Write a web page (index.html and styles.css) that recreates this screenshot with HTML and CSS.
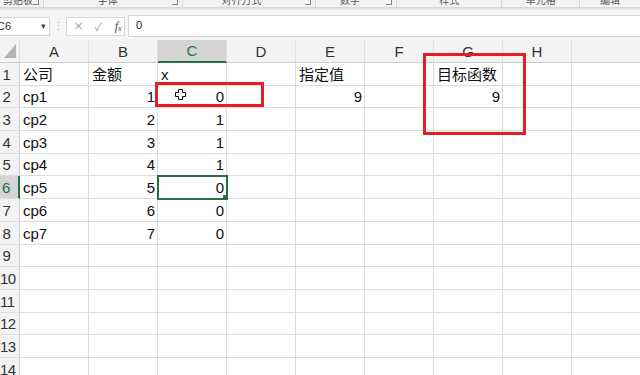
FILE: index.html
```html
<!DOCTYPE html>
<html lang="zh-CN">
<head>
    <meta charset="UTF-8">
    <meta name="viewport" content="width=device-width, initial-scale=1.0">
    <title>工作簿1 - Excel</title>
    <link rel="stylesheet" href="styles.css">
</head>
<body>
    <div class="ribbon">
        <div class="group g-clip"><span class="label">剪贴板</span><span class="launcher"></span></div>
        <div class="group g-font"><span class="label">字体</span><span class="launcher"></span></div>
        <div class="group g-align"><span class="label">对齐方式</span><span class="launcher"></span></div>
        <div class="group g-num"><span class="label">数字</span><span class="launcher"></span></div>
        <div class="group g-style"><span class="label">样式</span></div>
        <div class="group g-cells"><span class="label">单元格</span></div>
        <div class="group g-edit"><span class="label">编辑</span></div>
    </div>

    <div class="formula-row">
        <div class="name-box"><span class="ref">C6</span><span class="caret">▾</span></div>
        <span class="grip">⋮</span>
        <div class="fx-buttons">
            <span class="btn">✕</span>
            <span class="btn">✓</span>
            <span class="btn fx">f<sub>x</sub></span>
        </div>
        <div class="formula-input">0</div>
    </div>

    <div class="sheet">
        <table class="grid">
            <colgroup>
                <col class="c-head">
                <col><col><col><col><col><col><col><col>
                <col class="c-last">
            </colgroup>
            <thead>
                <tr>
                    <th class="corner">
                        <svg width="14" height="16" viewBox="0 0 14 16"><polygon points="13,1 13,15 1,15" fill="#b4b4b4"/></svg>
                    </th>
                    <th>A</th><th>B</th><th class="active">C</th><th>D</th>
                    <th>E</th><th>F</th><th>G</th><th>H</th><th></th>
                </tr>
            </thead>
            <tbody>
                <tr><th>1</th><td>公司</td><td>金额</td><td>x</td><td></td><td>指定值</td><td></td><td>目标函数</td><td></td><td></td></tr>
                <tr><th>2</th><td>cp1</td><td class="num">1</td><td class="num">0</td><td></td><td class="num">9</td><td></td><td class="num">9</td><td></td><td></td></tr>
                <tr><th>3</th><td>cp2</td><td class="num">2</td><td class="num">1</td><td></td><td></td><td></td><td></td><td></td><td></td></tr>
                <tr><th>4</th><td>cp3</td><td class="num">3</td><td class="num">1</td><td></td><td></td><td></td><td></td><td></td><td></td></tr>
                <tr><th>5</th><td>cp4</td><td class="num">4</td><td class="num">1</td><td></td><td></td><td></td><td></td><td></td><td></td></tr>
                <tr><th class="active">6</th><td>cp5</td><td class="num">5</td><td class="num selected">0</td><td></td><td></td><td></td><td></td><td></td><td></td></tr>
                <tr><th>7</th><td>cp6</td><td class="num">6</td><td class="num">0</td><td></td><td></td><td></td><td></td><td></td><td></td></tr>
                <tr><th>8</th><td>cp7</td><td class="num">7</td><td class="num">0</td><td></td><td></td><td></td><td></td><td></td><td></td></tr>
                <tr><th>9</th><td></td><td></td><td></td><td></td><td></td><td></td><td></td><td></td><td></td></tr>
                <tr><th>10</th><td></td><td></td><td></td><td></td><td></td><td></td><td></td><td></td><td></td></tr>
                <tr><th>11</th><td></td><td></td><td></td><td></td><td></td><td></td><td></td><td></td><td></td></tr>
                <tr><th>12</th><td></td><td></td><td></td><td></td><td></td><td></td><td></td><td></td><td></td></tr>
                <tr><th>13</th><td></td><td></td><td></td><td></td><td></td><td></td><td></td><td></td><td></td></tr>
                <tr><th>14</th><td></td><td></td><td></td><td></td><td></td><td></td><td></td><td></td><td></td></tr>
            </tbody>
        </table>

        <!-- red annotation boxes drawn over the grid -->
        <div class="mark mark-x"></div>
        <div class="mark mark-goal"></div>

        <svg class="cursor" width="11" height="11" viewBox="0 0 11 11">
            <path d="M3.5 0.5h4v3h3v4h-3v3h-4v-3h-3v-4h3z" fill="#fff" stroke="#000" stroke-width="1"/>
        </svg>
    </div>
</body>
</html>
```

FILE: styles.css
```css
:root {
    --grid: #dcdcdc;
    --head-bg: #f3f3f3;
    --head-line: #cdcdcd;
    --active-bg: #d4d4d4;
    --green: #217346;
    --red: #e81c24;
    --text: #111;
}

* {
    margin: 0;
    padding: 0;
    box-sizing: border-box;
}

body {
    width: 640px;
    height: 375px;
    overflow: hidden;
    background: #fff;
    font-family: 'Liberation Sans', 'Noto Sans CJK SC', sans-serif;
    color: var(--text);
}

/* ribbon group labels, cut off at the top of the shot */
.ribbon {
    display: flex;
    height: 8px;
    overflow: hidden;
    background: #f3f3f3;
    border-bottom: 1px solid #d8d8d8;
}

.group {
    position: relative;
    display: flex;
    justify-content: center;
    border-right: 1px solid #dadada;
}

.group .label {
    font-size: 10px;
    line-height: 10px;
    margin-top: -4px;
    color: #555;
}

.group .launcher {
    position: absolute;
    top: 0;
    right: 4px;
    width: 6px;
    height: 5px;
    border-right: 1px solid #888;
    border-bottom: 1px solid #888;
}

.g-clip  { width: 44px; justify-content: flex-start; padding-left: 3px; }
.g-font  { width: 139px; padding-right: 10px; }
.g-align { width: 133px; padding-right: 14px; }
.g-num   { width: 82px; padding-right: 12px; }
.g-style { width: 105px; }
.g-cells { width: 78px; }
.g-edit  { width: 60px; border-right: none; }

/* formula bar */
.formula-row {
    display: flex;
    align-items: center;
    height: 32px;
    padding-top: 2px;
    background: #f5f5f5;
    border-top: 2px solid #e4e4e4;
}

.name-box {
    display: flex;
    align-items: center;
    justify-content: space-between;
    width: 51px;
    height: 19px;
    margin-left: -1px;
    padding: 0 3px 0 0;
    background: #fff;
    border: 1px solid #d4d4d4;
    font-size: 11px;
    color: #333;
}

.name-box .ref {
    margin-left: -3px;
}

.name-box .caret {
    font-size: 9px;
    color: #444;
}

.grip {
    width: 16px;
    text-align: center;
    font-size: 11px;
    color: #b0b0b0;
}

.fx-buttons {
    display: flex;
    align-items: center;
    gap: 8px;
    width: 59px;
    height: 19px;
    padding-left: 6px;
    background: #fff;
    border: 1px solid #d8d8d8;
}

.btn {
    width: 12px;
    text-align: center;
    font-size: 11px;
    color: #a8a8a8;
}

.btn.fx {
    font-family: 'Liberation Serif', serif;
    font-style: italic;
    font-size: 12px;
    color: #444;
}

.btn.fx sub {
    font-size: 8px;
    vertical-align: -1px;
}

.formula-input {
    flex: 1;
    height: 22px;
    margin-left: 3px;
    padding: 3px 0 0 7px;
    background: #fff;
    border: 1px solid #d8d8d8;
    border-right: none;
    font-size: 11px;
    color: #222;
}

/* worksheet */
.sheet {
    position: relative;
}

.grid {
    table-layout: fixed;
    border-collapse: separate;
    border-spacing: 0;
    width: 641px;
    font-size: 15px;
}

.grid col { width: 69px; }
.grid col.c-head { width: 20px; }
.grid col.c-last { width: 72px; }

.grid thead tr { height: 22px; }
.grid tbody tr { height: 22.7px; }

.grid th,
.grid td {
    border-right: 1px solid var(--grid);
    border-bottom: 1px solid var(--grid);
    white-space: nowrap;
    overflow: hidden;
    line-height: 16px;
}

.grid thead th {
    background: var(--head-bg);
    border-right-color: #e0e0e0;
    border-bottom: 1px solid var(--head-line);
    font-weight: normal;
    color: #333;
    vertical-align: middle;
    padding-top: 1px;
}

.grid thead th.corner {
    padding: 3px 0 0 3px;
    text-align: left;
}

.grid thead th.active {
    background: var(--active-bg);
    border-bottom: 2px solid var(--green);
    color: var(--green);
}

.grid tbody th {
    background: var(--head-bg);
    border-right: 1px solid var(--head-line);
    border-bottom-color: #dedede;
    font-weight: normal;
    color: #333;
    text-align: center;
    padding: 0 6px 2px 0;
    vertical-align: bottom;
    letter-spacing: -0.5px;
}

.grid tbody th.active {
    background: var(--active-bg);
    border-right: 2px solid var(--green);
    color: var(--green);
}

.grid td {
    padding: 0 2px 2px 3px;
    vertical-align: bottom;
}

.grid td.num {
    text-align: right;
}

.grid td.selected {
    position: relative;
    outline: 2px solid var(--green);
    outline-offset: -1px;
}

.grid td.selected::after {
    content: "";
    position: absolute;
    right: -3px;
    bottom: -3px;
    width: 5px;
    height: 5px;
    background: var(--green);
    border: 1px solid #fff;
}

.mark {
    position: absolute;
    border: 3px solid var(--red);
}

.mark-x {
    left: 155px;
    top: 42px;
    width: 109px;
    height: 25px;
}

.mark-goal {
    left: 423px;
    top: 13px;
    width: 103px;
    height: 82px;
}

.cursor {
    position: absolute;
    left: 175px;
    top: 49px;
}
```
